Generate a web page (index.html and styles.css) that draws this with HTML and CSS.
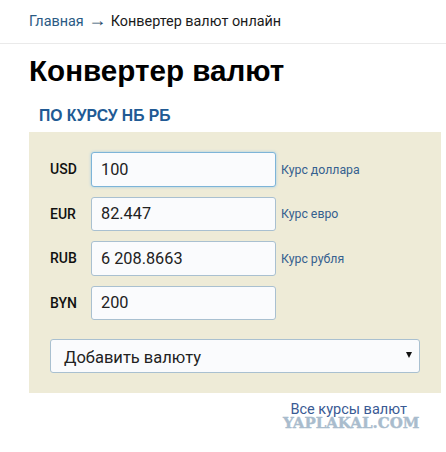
FILE: index.html
```html
<!DOCTYPE html>
<html lang="ru">
<head>
    <meta charset="UTF-8">
    <title>Конвертер валют онлайн</title>
    <link rel="stylesheet" href="styles.css">
</head>
<body>

<div class="crumbs">
    <a href="#">Главная</a>
    <span class="arrow">→</span>
    <span>Конвертер валют онлайн</span>
</div>

<div class="content">
    <h1>Конвертер валют</h1>
    <h2>ПО КУРСУ НБ РБ</h2>

    <div class="panel">
        <div class="row">
            <label>USD</label>
            <input class="active" type="text" value="100">
            <a href="#">Курс доллара</a>
        </div>
        <div class="row">
            <label>EUR</label>
            <input type="text" value="82.447">
            <a href="#">Курс евро</a>
        </div>
        <div class="row">
            <label>RUB</label>
            <input type="text" value="6 208.8663">
            <a href="#">Курс рубля</a>
        </div>
        <div class="row">
            <label>BYN</label>
            <input type="text" value="200">
        </div>
        <div class="add-currency">
            <span class="add-label">Добавить валюту</span>
            <span class="caret"></span>
        </div>
    </div>

    <div class="all-rates"><a href="#">Все курсы валют</a></div>
</div>

<div class="watermark">YAPLAKAL.COM</div>

</body>
</html>
```

FILE: styles.css
```css
* {
    margin: 0;
    padding: 0;
    box-sizing: border-box;
}

body {
    font-family: Roboto, "Liberation Sans", sans-serif;
    background-color: #fff;
    color: #111;
    position: relative;
    height: 452px;
    overflow: hidden;
}

a {
    text-decoration: none;
}

.crumbs {
    display: flex;
    align-items: center;
    height: 44px;
    padding: 0 0 0 29px;
    font-size: 14.4px;
    border-bottom: 1px solid #eaeaea;
    color: #1a1a1a;
}

.crumbs a {
    color: #2a5a84;
}

.crumbs .arrow {
    width: 27px;
    margin-top: -3px;
    text-align: center;
    color: #2a4a68;
    font-family: "Liberation Sans", sans-serif;
    font-size: 18px;
}

.content {
    padding: 0 5px 0 29px;
}

h1 {
    font-family: "Liberation Sans", Arial, sans-serif;
    font-size: 29.6px;
    font-weight: bold;
    color: #000;
    line-height: 36px;
    margin-top: 9px;
}

h2 {
    font-family: "Liberation Sans", Arial, sans-serif;
    font-size: 15.7px;
    font-weight: bold;
    color: #215a94;
    line-height: 20px;
    margin: 17px 0 6px 10px;
}

.panel {
    background-color: #eeebd7;
    height: 261px;
    padding: 20px 21px 0 21px;
}

.row {
    display: flex;
    align-items: center;
    height: 34.5px;
    margin-bottom: 10px;
}

.row label {
    width: 41px;
    font-size: 14px;
    font-weight: 500;
    color: #111;
}

.row input {
    width: 185px;
    height: 100%;
    padding: 0 9px;
    font-family: inherit;
    font-size: 16.3px;
    color: #222;
    background-color: #fafbfd;
    border: 1px solid #a9c0d0;
    border-radius: 3px;
}

.row input.active {
    border-color: #7db4d8;
    box-shadow: 0 0 3px #9fcbe8;
}

.row a {
    margin-left: 5px;
    padding-top: 1px;
    font-size: 12.3px;
    color: #35608f;
}

.add-currency {
    display: flex;
    justify-content: space-between;
    align-items: center;
    width: 370px;
    height: 34px;
    margin-top: 19px;
    padding: 0 7px 0 13px;
    font-size: 16.5px;
    color: #222;
    background-color: #fafbfd;
    border: 1px solid #a9c0d0;
    border-radius: 3px;
}

.add-label {
    padding-top: 2px;
}

.caret {
    width: 0;
    height: 0;
    margin-bottom: 3px;
    border-left: 3px solid transparent;
    border-right: 3px solid transparent;
    border-top: 6px solid #111;
}

.all-rates {
    width: 378px;
    text-align: right;
    margin-top: 8px;
    font-size: 14.5px;
}

.all-rates a {
    color: #3a5a94;
}

.watermark {
    position: absolute;
    left: 283px;
    top: 414px;
    font-family: "DejaVu Serif", serif;
    font-size: 15px;
    font-weight: bold;
    color: #a9bccd;
    -webkit-text-stroke: 0.4px #a9bccd;
}
```
